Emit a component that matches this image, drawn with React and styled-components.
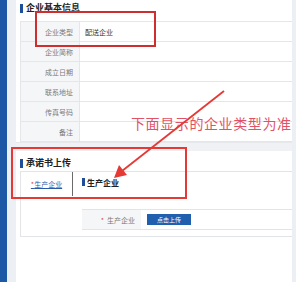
import React from "react";
import styled, { createGlobalStyle } from "styled-components";

const Global = createGlobalStyle`
  html, body { margin: 0; padding: 0; background: #fff; }
  body { width: 296px; height: 282px; overflow: hidden; font-family: "Noto Sans CJK SC", "Noto Sans", sans-serif; }
`;

const Page = styled.div`
  position: relative;
  display: flex;
  width: 296px;
  height: 282px;
  overflow: hidden;
`;
const SideBar = styled.div`
  width: 7px;
  background: #1c58a5;
  flex-shrink: 0;
`;
const Gutter = styled.div`
  width: ${(p) => p.$w}px;
  background: #eceff4;
  flex-shrink: 0;
`;
const Main = styled.div`
  flex: 1;
  display: flex;
  flex-direction: column;
  background: #fff;
`;
const Section = styled.div`
  background: #fff;
  padding-left: 4px;
`;
const Gap = styled.div`
  height: 8px;
  background: #eff1f4;
  border-top: 1px solid #e6e8ec;
`;
const Title = styled.div`
  display: flex;
  align-items: center;
  gap: 3px;
  height: ${(p) => p.$h}px;
  padding-top: ${(p) => p.$pt}px;
  box-sizing: border-box;
  align-items: flex-start;
  font-size: 9px;
  line-height: 16px;
  font-weight: 700;
  color: #222;
  &::before {
    content: "";
    width: 3px;
    height: 9px;
    margin-top: 4px;
    background: #1f4e9a;
  }
`;
const Table = styled.div`
  border-top: 1px solid #e4e6e9;
  border-left: 1px solid #e4e6e9;
`;
const Row = styled.div`
  display: flex;
  height: 19px;
  border-bottom: 1px solid #e4e6e9;
`;
const Label = styled.div`
  width: 59px;
  background: #f5f6f8;
  border-right: 1px solid #e4e6e9;
  display: flex;
  align-items: center;
  justify-content: flex-end;
  padding-right: 6px;
  box-sizing: border-box;
  font-size: 7px;
  color: #7a7a7a;
`;
const Value = styled.div`
  flex: 1;
  display: flex;
  align-items: center;
  padding-left: 5px;
  font-size: 7px;
  color: #333;
`;
const Box = styled.div`
  display: flex;
  border-top: 1px solid #e2e4e8;
  border-left: 1px solid #e2e4e8;
  border-bottom: 1px solid #e2e4e8;
`;
const TabList = styled.div`
  width: 52px;
  flex-shrink: 0;
`;
const Tab = styled.div`
  height: 24px;
  border-right: 1px solid #6b6b6b;
  display: flex;
  align-items: center;
  justify-content: center;
  font-size: 7px;
  color: #2d5aa8;
  text-decoration: underline;
`;
const Star = styled.span`
  color: #e0474c;
  text-decoration: none;
  margin-right: ${(p) => p.$mr || 0}px;
`;
const Panel = styled.div`
  flex: 1;
  padding: 4px 0 6px 9px;
`;
const PanelTitle = styled.div`
  display: flex;
  align-items: center;
  gap: 2px;
  height: 12px;
  font-size: 8px;
  font-weight: 700;
  color: #222;
  margin-bottom: 21px;
  &::before {
    content: "";
    width: 3px;
    height: 8px;
    background: #1f4e9a;
  }
`;
const UploadRow = styled.div`
  display: flex;
  height: 19px;
  border-top: 1px solid #e2e4e8;
  border-bottom: 1px solid #e2e4e8;
`;
const UploadLabel = styled.div`
  width: 59px;
  background: #f5f6f8;
  display: flex;
  align-items: center;
  justify-content: flex-end;
  padding-right: 6px;
  box-sizing: border-box;
  font-size: 7px;
  color: #777;
`;
const UploadCell = styled.div`
  flex: 1;
  display: flex;
  align-items: center;
  padding-left: 6px;
`;
const Button = styled.div`
  width: 44px;
  height: 11px;
  background: #1f5fad;
  color: #fff;
  font-size: 6px;
  display: flex;
  align-items: center;
  justify-content: center;
`;
const RedBox = styled.div`
  position: absolute;
  left: ${(p) => p.$x}px;
  top: ${(p) => p.$y}px;
  width: ${(p) => p.$w}px;
  height: ${(p) => p.$h}px;
  border: ${(p) => p.$b}px solid ${(p) => p.$c};
  box-sizing: border-box;
  pointer-events: none;
`;
const Note = styled.div`
  position: absolute;
  left: 131px;
  top: 114px;
  font-size: 14px;
  letter-spacing: 0.6px;
  line-height: 18px;
  color: #df5367;
  white-space: nowrap;
`;
const Arrow = styled.svg`
  position: absolute;
  left: 0;
  top: 0;
  pointer-events: none;
`;

const rows = [
  ["企业类型", "配送企业"],
  ["企业简称", ""],
  ["成立日期", ""],
  ["联系地址", ""],
  ["传真号码", ""],
  ["备注", ""],
];

export default function App() {
  return (
    <>
      <Global />
      <Page>
        <SideBar />
        <Gutter $w={9} />
        <Main>
          <Section>
            <Title $h={21} $pt={0}>企业基本信息</Title>
            <Table>
              {rows.map(([l, v]) => (
                <Row key={l}>
                  <Label>{l}</Label>
                  <Value>{v}</Value>
                </Row>
              ))}
            </Table>
          </Section>
          <Gap />
          <Section>
            <Title $h={20} $pt={4}>承诺书上传</Title>
            <Box>
              <TabList>
                <Tab>
                  <Star>*</Star>生产企业
                </Tab>
              </TabList>
              <Panel>
                <PanelTitle>生产企业</PanelTitle>
                <UploadRow>
                  <UploadLabel>
                    <Star $mr={3}>*</Star>生产企业
                  </UploadLabel>
                  <UploadCell>
                    <Button>点击上传</Button>
                  </UploadCell>
                </UploadRow>
              </Panel>
            </Box>
          </Section>
        </Main>
        <Gutter $w={4} />
        <RedBox $x={35} $y={11} $w={121} $h={36} $b={2} $c="#cf2e2e" />
        <RedBox $x={11} $y={147} $w={176} $h={52} $b={2.5} $c="#e53935" />
        <Note>下面显示的企业类型为准</Note>
        <Arrow width="296" height="282" viewBox="0 0 296 282">
          <line x1="224" y1="91" x2="122" y2="171" stroke="#e53935" strokeWidth="1.8" />
          <polygon points="114,178 119,165 127,175" fill="#e53935" />
        </Arrow>
      </Page>
    </>
  );
}
